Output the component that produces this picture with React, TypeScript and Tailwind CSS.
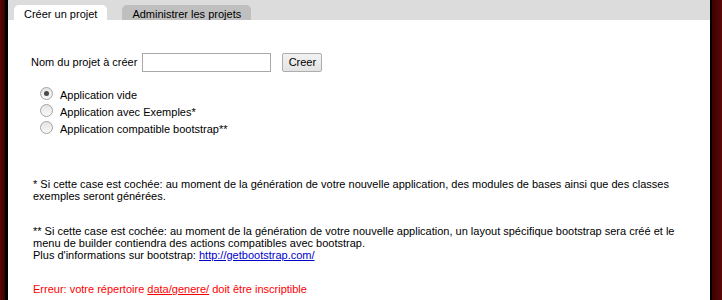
import React from "react";

function Radio({ checked }: { checked?: boolean }) {
  return (
    <span className="flex h-[13px] w-[13px] shrink-0 items-center justify-center rounded-full border border-[#a3a3a3] bg-gradient-to-b from-[#e4e4e4] to-[#f9f9f9]">
      {checked && <span className="h-[5px] w-[5px] rounded-full bg-[#4a4a4a]" />}
    </span>
  );
}

const options = [
  { label: "Application vide", checked: true },
  { label: "Application avec Exemples*" },
  { label: "Application compatible bootstrap**" },
];

export default function App() {
  return (
    <div
      className="flex h-[300px] w-[722px] overflow-hidden bg-white text-[11px] text-black"
      style={{ fontFamily: '"Liberation Sans", Arial, sans-serif' }}
    >
      <div className="w-[5px] bg-gradient-to-r from-[#5c0606] to-[#3a0202]" />
      <div className="w-[3px] bg-black" />

      <div className="flex min-w-0 flex-1 flex-col">
        {/* tabs */}
        <div className="flex h-[20px] shrink-0 items-end bg-[#dcdcdc] pl-[6px]">
          <div className="h-[15px] rounded-t-[5px] bg-white px-[10px] pt-[3px] leading-[13px]">
            Créer un projet
          </div>
          <div className="ml-[15px] h-[15px] rounded-t-[5px] bg-[#bfbfbf] px-[10px] pt-[3px] leading-[13px]">
            Administrer les projets
          </div>
        </div>

        <div className="flex flex-col pl-[23px] pr-[8px]">
          {/* form */}
          <div className="mt-[33px] flex h-[19px] items-center">
            <span className="leading-[13px]">Nom du projet à créer</span>
            <input
              type="text"
              className="ml-[5px] h-[19px] w-[129px] border border-[#a9a9a9] bg-white outline-none"
            />
            <button className="ml-[11px] h-[19px] w-[40px] rounded-[2px] border border-[#adadad] bg-gradient-to-b from-[#f2f2f2] to-[#e3e3e3] leading-[13px]">
              Creer
            </button>
          </div>

          {/* options */}
          <div className="mt-[15px] flex flex-col pl-[9px]">
            {options.map((o) => (
              <label key={o.label} className="flex h-[17px] items-start">
                <Radio checked={o.checked} />
                <span className="ml-[7px] pt-[1px] leading-[14px]">{o.label}</span>
              </label>
            ))}
          </div>

          {/* notes */}
          <p className="mt-[40px] pl-[2px] leading-[12px]">
            * Si cette case est cochée: au moment de la génération de votre nouvelle application, des modules de bases ainsi que des classes exemples seront générées.
          </p>
          <p className="mt-[23px] pl-[2px] leading-[12px]">
            ** Si cette case est cochée: au moment de la génération de votre nouvelle application, un layout spécifique bootstrap sera créé et le menu de builder contiendra des actions compatibles avec bootstrap.
            <br />
            Plus d&apos;informations sur bootstrap:{" "}
            <a href="#" className="text-[#0000cc] underline">
              http://getbootstrap.com/
            </a>
          </p>
          <p className="mt-[22px] pl-[2px] leading-[12px] text-[#ff0000]">
            Erreur: votre répertoire <a href="#" className="underline">data/genere/</a> doit être inscriptible
          </p>
        </div>
      </div>

      <div className="w-[2px] bg-black" />
      <div className="w-[10px] bg-gradient-to-r from-[#3a0202] to-[#5c0606]" />
    </div>
  );
}
